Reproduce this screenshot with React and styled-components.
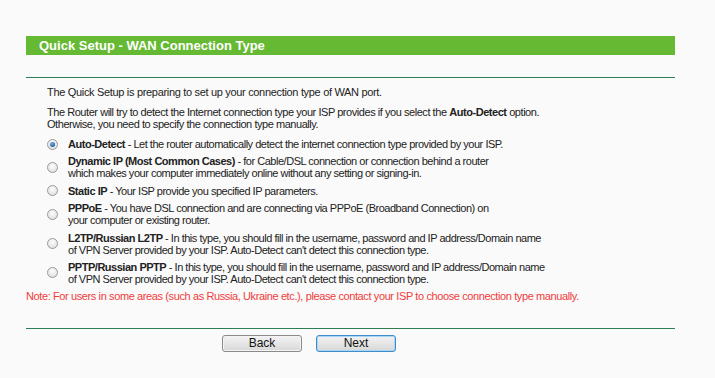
import React, { useState } from "react";
import styled, { createGlobalStyle } from "styled-components";

const GlobalStyle = createGlobalStyle`
    body {
        margin: 0;
        background: #fafafa;
        font-family: "Liberation Sans", Arial, sans-serif;
    }
`;

const Page = styled.div`
    width: 649px;
    padding: 36px 0 0 26px;
    color: #222;
    font-size: 11px;
    letter-spacing: -0.46px;
`;

const TitleBar = styled.div`
    height: 19px;
    background: #66b933;
    color: #fff;
    font-size: 13px;
    font-weight: bold;
    letter-spacing: 0;
    line-height: 19px;
    padding-left: 13px;
`;

const Rule = styled.div`
    height: 1px;
    background: #2e7d55;
    margin-top: ${(p) => p.$top}px;
`;

const Body = styled.div`
    padding: 8px 0 0 21px;
    display: flex;
    flex-direction: column;
    line-height: 12px;
`;

const Para = styled.p`
    margin: 0 0 8px;
    letter-spacing: ${(p) => p.$spacing ?? -0.45}px;
`;

const OptionList = styled.div`
    display: flex;
    flex-direction: column;
    gap: 5.4px;
`;

const Option = styled.label`
    display: grid;
    grid-template-columns: 21px 1fr;
    align-items: center;
    letter-spacing: -0.48px;
`;

const Radio = styled.span`
    width: 11px;
    height: 11px;
    box-sizing: border-box;
    border-radius: 50%;
    border: 1px solid #9a9a9a;
    background: radial-gradient(circle at 50% 35%, #fdfdfd 0%, #e4e4e4 70%, #d4d4d4 100%);
    display: flex;
    align-items: center;
    justify-content: center;

    &::after {
        content: "";
        width: 5px;
        height: 5px;
        border-radius: 50%;
        background: radial-gradient(circle at 40% 35%, #7fb0e0 0%, #2a6bb0 60%, #1c4a85 100%);
        display: ${(p) => (p.$checked ? "block" : "none")};
    }
`;

const Note = styled.p`
    margin: 5px 0 0 -21px;
    color: #f03c3c;
    letter-spacing: -0.39px;
`;

const Buttons = styled.div`
    display: flex;
    gap: 14px;
    padding: 6px 0 0 196px;
`;

const Button = styled.button`
    width: 80px;
    height: 17px;
    padding: 0;
    box-sizing: border-box;
    border: 1px solid ${(p) => (p.$primary ? "#3d8ec9" : "#8a8a8a")};
    box-shadow: inset 0 0 0 1px ${(p) => (p.$primary ? "#a9d6f5" : "#f4f4f4")};
    border-radius: 3px;
    background: linear-gradient(#f3f3f3, #e6e6e6 50%, #d7d7d7);
    font-family: "Liberation Sans", Arial, sans-serif;
    font-size: 12px;
    line-height: 15px;
    color: #111;
`;

const options = [
    {
        name: "Auto-Detect",
        text: " - Let the router automatically detect the internet connection type provided by your ISP.",
    },
    {
        name: "Dynamic IP (Most Common Cases)",
        text: " - for Cable/DSL connection or connection behind a router",
        more: "which makes your computer immediately online without any setting or signing-in.",
    },
    {
        name: "Static IP",
        text: " - Your ISP provide you specified IP parameters.",
    },
    {
        name: "PPPoE",
        text: " - You have DSL connection and are connecting via PPPoE (Broadband Connection) on",
        more: "your computer or existing router.",
    },
    {
        name: "L2TP/Russian L2TP",
        text: " - In this type, you should fill in the username, password and IP address/Domain name",
        more: "of VPN Server provided by your ISP. Auto-Detect can't detect this connection type.",
    },
    {
        name: "PPTP/Russian PPTP",
        text: " - In this type, you should fill in the username, password and IP address/Domain name",
        more: "of VPN Server provided by your ISP. Auto-Detect can't detect this connection type.",
    },
];

export default function App() {
    const [selected, setSelected] = useState(0);

    return (
        <Page>
            <GlobalStyle />
            <TitleBar>Quick Setup - WAN Connection Type</TitleBar>
            <Rule $top={22} />
            <Body>
                <Para $spacing={-0.32}>
                    The Quick Setup is preparing to set up your connection type of WAN port.
                </Para>
                <Para>
                    The Router will try to detect the Internet connection type your ISP provides if you select the{" "}
                    <b>Auto-Detect</b> option.
                    <br />
                    Otherwise, you need to specify the connection type manually.
                </Para>
                <OptionList>
                    {options.map((o, i) => (
                        <Option key={o.name} onClick={() => setSelected(i)}>
                            <Radio $checked={selected === i} />
                            <span>
                                <b>{o.name}</b>
                                {o.text}
                                {o.more && (
                                    <>
                                        <br />
                                        {o.more}
                                    </>
                                )}
                            </span>
                        </Option>
                    ))}
                </OptionList>
                <Note>
                    Note: For users in some areas (such as Russia, Ukraine etc.), please contact your ISP to choose
                    connection type manually.
                </Note>
            </Body>
            <Rule $top={26} />
            <Buttons>
                <Button>Back</Button>
                <Button $primary>Next</Button>
            </Buttons>
        </Page>
    );
}
